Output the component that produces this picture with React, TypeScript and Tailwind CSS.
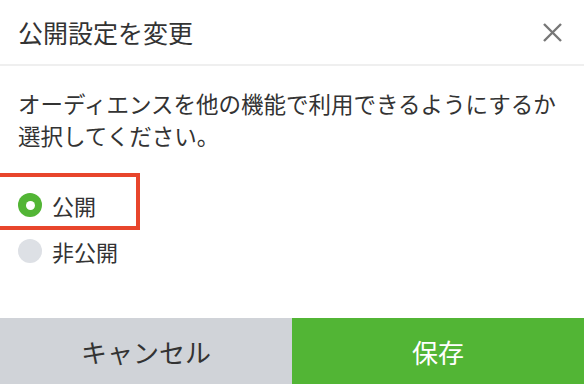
import { useState } from "react";

const font = { fontFamily: '"Noto Sans CJK JP", "Noto Sans", sans-serif' };

export default function App() {
  const [visibility, setVisibility] = useState<"public" | "private">("public");

  const options = [
    { id: "public" as const, label: "公開" },
    { id: "private" as const, label: "非公開" },
  ];

  return (
    <div className="w-[584px] h-[384px] bg-white flex flex-col overflow-hidden relative" style={font}>
      <div className="h-[66px] flex items-center justify-between pl-[18px] pr-[22px] border-b-2 border-[#efefef] shrink-0">
        <h2 className="text-[25px] text-[#333] leading-none">公開設定を変更</h2>
        <button className="w-[19px] h-[19px] flex items-center justify-center">
          <svg width="19" height="19" viewBox="0 0 19 19">
            <path d="M1 1 L18 18 M18 1 L1 18" stroke="#777" strokeWidth="2.4" />
          </svg>
        </button>
      </div>

      <div className="flex-1 pl-[18px] pr-2 pt-[21px]">
        <p className="text-[22.5px] leading-[32px] text-[#333] whitespace-nowrap">
          オーディエンスを他の機能で利用できるようにするか
          <br />
          選択してください。
        </p>

        <div className="mt-[42px] flex flex-col gap-[22px]">
          {options.map((opt) => {
            const active = visibility === opt.id;
            return (
              <label
                key={opt.id}
                className="flex items-center gap-[10px] h-[24px] cursor-pointer"
                onClick={() => setVisibility(opt.id)}
              >
                <span
                  className={
                    active
                      ? "w-[24px] h-[24px] rounded-full bg-[#52b535] flex items-center justify-center"
                      : "w-[24px] h-[24px] rounded-full bg-[#dde0e5]"
                  }
                >
                  {active && <span className="w-[9px] h-[9px] rounded-full bg-white" />}
                </span>
                <span className="text-[22px] text-[#333] leading-none">{opt.label}</span>
              </label>
            );
          })}
        </div>
      </div>

      {/* highlight annotation */}
      <div className="absolute left-[-4px] top-[173px] w-[144px] h-[57px] border-[4px] border-[#e8452c] pointer-events-none" />

      <div className="h-[66px] flex shrink-0">
        <button className="flex-1 bg-[#d0d3d8] text-[26px] text-[#333]">キャンセル</button>
        <button className="flex-1 bg-[#52b535] text-[26px] text-white">保存</button>
      </div>
    </div>
  );
}
